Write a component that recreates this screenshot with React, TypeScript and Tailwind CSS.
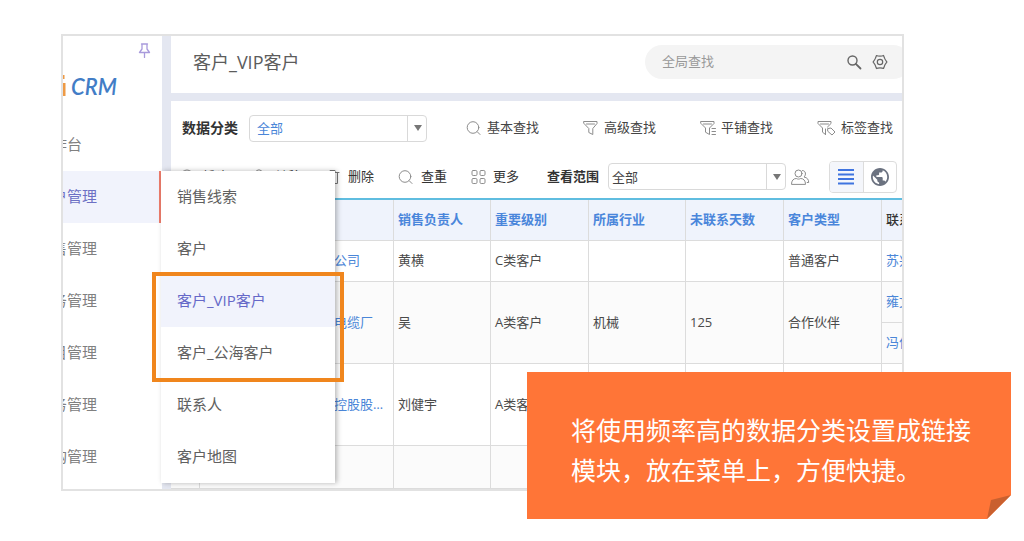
import type { ReactNode } from "react";

const mainMenu = [
  { name: "工作台", active: false },
  { name: "客户管理", active: true },
  { name: "销售管理", active: false },
  { name: "业务管理", active: false },
  { name: "项目管理", active: false },
  { name: "财务管理", active: false },
  { name: "采购管理", active: false },
];

const subMenu = [
  { name: "销售线索", active: false },
  { name: "客户", active: false },
  { name: "客户_VIP客户", active: true },
  { name: "客户_公海客户", active: false },
  { name: "联系人", active: false },
  { name: "客户地图", active: false },
];

const columns = ["销售负责人", "重要级别", "所属行业", "未联系天数", "客户类型"];

const customers = [
  {
    name: "上海华信科技发展有限公司",
    cells: ["黄横", "C类客户", "", "", "普通客户"],
    contacts: ["苏兴"],
    height: "h-[41px]",
    stripe: "bg-white",
  },
  {
    name: "江苏省宜兴市东方特种电缆厂",
    cells: ["吴", "A类客户", "机械", "125", "合作伙伴"],
    contacts: ["雍文", "冯伟"],
    height: "h-[41px]",
    stripe: "bg-[#fbfbfb]",
  },
  {
    name: "中国东方国际投资集团控股股份有限公司",
    cells: ["刘健宇", "A类客户", "", "", ""],
    contacts: [""],
    height: "h-[82px]",
    stripe: "bg-white",
  },
  {
    name: "",
    cells: ["", "", "", "", ""],
    contacts: [""],
    height: "h-[43px]",
    stripe: "bg-[#fbfbfb]",
  },
];

interface IconProps {
  children: ReactNode;
  className?: string;
  viewBox?: string;
}

function Icon({ children, className = "w-4 h-4", viewBox = "0 0 16 16" }: IconProps) {
  return (
    <svg
      viewBox={viewBox}
      className={`shrink-0 ${className}`}
      fill="none"
      stroke="currentColor"
      strokeLinecap="round"
      strokeLinejoin="round"
      aria-hidden="true"
    >
      {children}
    </svg>
  );
}

const SearchIcon = () => (
  <Icon className="w-4 h-4 text-[#8c8c8c]">
    <circle cx="7" cy="7.5" r="5.8" />
    <path d="M11.3 11.8 14 14.5" />
  </Icon>
);

const FunnelIcon = () => (
  <Icon className="w-4 h-4 text-[#8c8c8c]">
    <path d="M1 1.5h13v2L9.800 8.500v6l-4-2v-4L1 3.500zM3.500 4h8" />
  </Icon>
);

const FunnelListIcon = () => (
  <Icon className="w-4 h-4 text-[#8c8c8c]">
    <path d="M1 1.500h13v2L9.500 8v6.500l-4-2.300V8L1 3.500zM3.500 4h8M12 8.500h3.500M12 11.500h3.500M12 14.500h3.500" />
  </Icon>
);

const FunnelTagIcon = () => (
  <Icon className="w-[19px] h-4 text-[#8c8c8c]" viewBox="0 0 19 16">
    <path d="M8.500 14.500 5.500 12.200V8L1 3.500v-2h13v2L10.500 7M3.500 4h8M8.500 14.500V9M11 8.500l3-.5 4 4-3 3-4-3.500z" />
  </Icon>
);

const TrashIcon = () => (
  <Icon className="w-4 h-4 text-[#777]">
    <path d="M1 3.500h13M5 3.500V1.500h5v2M2.500 3.500v11h10v-11M6 6.500v5M9 6.500v5" />
  </Icon>
);

const MoreIcon = () => (
  <Icon className="w-[15px] h-4 text-[#8c8c8c]" viewBox="0 0 15 16">
    <rect x="1" y="1.500" width="5" height="5" rx="1.200" />
    <rect x="9" y="1.500" width="5" height="5" rx="1.200" />
    <rect x="1" y="9.500" width="5" height="5" rx="1.200" />
    <rect x="9" y="9.500" width="5" height="5" rx="1.200" />
  </Icon>
);

const AddIcon = () => (
  <Icon className="w-4 h-4 text-[#8c8c8c]">
    <circle cx="8" cy="7.500" r="6.500" />
    <path d="M8 4.500v6M5 7.500h6" />
  </Icon>
);

const TransferIcon = () => (
  <Icon className="w-4 h-4 text-[#8c8c8c]">
    <circle cx="7" cy="4" r="3.200" />
    <path d="M1 14.500c0-4 2.500-6 6-6s6 2 6 6z" />
  </Icon>
);

const PinIcon = () => (
  <Icon className="w-[13px] h-[15px] text-[#a99bdc]" viewBox="0 0 13 15">
    <path
      d="M3.500 1h6M4 1.500V6L1.500 9.500h10L9 6V1.500M6.500 10v4.500"
      strokeWidth="1.300"
    />
  </Icon>
);

interface DropdownProps {
  id: string;
  className: string;
}

function Dropdown({ id, className }: DropdownProps) {
  return (
    <div className="relative w-[178px] shrink-0">
      <select
        id={id}
        className={`block w-full h-[27px] appearance-none rounded border border-[#d9d9d9] bg-white text-[13px] leading-5 ${className}`}
      >
        <option>全部</option>
      </select>
      <span className="pointer-events-none absolute inset-y-0 right-0 flex w-5 items-center justify-center border-l border-[#d9d9d9]">
        <svg viewBox="0 0 8 6" className="w-2 h-1.5" fill="#777" aria-hidden="true">
          <path d="M0 0h8L4 6z" />
        </svg>
      </span>
    </div>
  );
}

function ToolButton({ icon, label }: { icon: ReactNode; label: string }) {
  return (
    <button type="button" className="flex shrink-0 items-center gap-[7px] whitespace-nowrap text-[#333]">
      {icon}
      {label}
    </button>
  );
}

function FilterButton({ icon, label }: { icon: ReactNode; label: string }) {
  return (
    <button type="button" className="flex shrink-0 items-center gap-[5px] whitespace-nowrap text-[#444]">
      {icon}
      {label}
    </button>
  );
}

function Sidebar() {
  return (
    <nav className="w-[99px] shrink-0 bg-white">
      <div className="flex h-[83px] flex-col">
        <button type="button" aria-label="固定菜单" className="ml-auto mr-[11px] mt-[7px]">
          <PinIcon />
        </button>
        <div className="mt-[17px] flex items-center">
          <svg viewBox="0 0 3 24" className="h-6 w-[3px]" aria-hidden="true">
            <path d="M0 0h1.500v4H0zM0 8h2.500v13H0z" fill="#ee9a45" />
          </svg>
          <span className="ml-[5px] font-['Lato'] text-[22px] leading-6 font-semibold italic text-[#427dc6]">CRM</span>
        </div>
      </div>
      <ul>
        {mainMenu.map((item) => (
          <li key={item.name}>
            <a
              href="#"
              className={`flex h-[52px] w-[98px] items-center border-r-2 pb-0.5 text-[15px] whitespace-nowrap ${
                item.active ? "border-[#ee7c6c] bg-[#f1f3fc] text-[#6d70c4]" : "border-transparent text-[#808080]"
              }`}
            >
              <span className="-ml-[26px]">{item.name}</span>
            </a>
          </li>
        ))}
      </ul>
    </nav>
  );
}

function SubMenu() {
  return (
    <ul className="absolute left-[98px] top-[135px] w-[174px] bg-white shadow-[2px_0_5px_rgba(0,0,0,0.28)]">
      {subMenu.map((item) => (
        <li key={item.name}>
          <a
            href="#"
            className={`flex h-[52px] items-center pb-0.5 pl-4 text-[15px] ${
              item.active ? "bg-[#f1f3fc] text-[#6568c8]" : "text-[#606060]"
            }`}
          >
            {item.name}
          </a>
        </li>
      ))}
    </ul>
  );
}

function Header() {
  return (
    <header className="flex h-[57px] items-center bg-white pb-[5px] pl-[22px]">
      <h1 className="text-lg leading-6 whitespace-nowrap text-[#5c5c5c]">客户_VIP客户</h1>
      <div className="-mr-2 ml-auto flex h-[34px] w-[265px] shrink-0 items-center rounded-full bg-[#f4f4f4] pl-[17px]">
        <input
          type="text"
          aria-label="全局查找"
          placeholder="全局查找"
          className="w-[184px] bg-transparent text-[13px] outline-none placeholder:text-[#999]"
        />
        <button type="button" aria-label="查找" className="text-[#666]">
          <Icon>
            <circle cx="6.500" cy="6.500" r="4.500" strokeWidth="1.400" />
            <path d="M9.800 9.800 14.500 14.500" strokeWidth="1.800" />
          </Icon>
        </button>
        <button type="button" aria-label="设置" className="ml-2.5 text-[#666]">
          <Icon>
            <path
              d="M4.500 1.500c1.500.9 5.500.9 7 0l1 2.500c.3 1.500 1.300 2.500 2.500 4-1.200 1.500-2.200 2.500-2.500 4l-1 2.500c-1.500-.9-5.500-.9-7 0l-1-2.500c-.3-1.500-1.300-2.500-2.500-4 1.200-1.500 2.200-2.500 2.500-4z"
              strokeWidth="1.200"
            />
            <circle cx="8" cy="8" r="2.700" strokeWidth="1.200" />
          </Icon>
        </button>
      </div>
    </header>
  );
}

function CustomerTable() {
  const cell = "border-r border-b border-[#dcdcdc] px-1 truncate";
  return (
    <table className="w-full table-fixed border-separate border-spacing-0 border-t-2 border-[#5fbde0] text-left text-[13px] text-[#4a4a4a]">
      <colgroup>
        <col className="w-[29px]" />
        <col className="w-[194px]" />
        <col className="w-[97px]" />
        <col className="w-[98px]" />
        <col className="w-[97px]" />
        <col className="w-[98px]" />
        <col className="w-[98px]" />
        <col />
      </colgroup>
      <thead>
        <tr className="h-[41px] bg-[#eff3fc] text-[#4a86db]">
          <th className={cell}></th>
          <th className={cell}></th>
          {columns.map((name) => (
            <th key={name} className={`${cell} font-bold`}>{name}</th>
          ))}
          <th className="overflow-hidden border-b border-[#dcdcdc] px-1 font-medium whitespace-nowrap text-[#333]">联系人</th>
        </tr>
      </thead>
      {customers.map((row, i) => (
        <tbody key={i} className={row.stripe}>
          {row.contacts.map((contact, n) => (
            <tr key={n} className={row.height}>
              {n === 0 && (
                <>
                  <td rowSpan={row.contacts.length} className={cell}></td>
                  <td rowSpan={row.contacts.length} className={`${cell} text-[#4a86d8]`}>{row.name}</td>
                  {row.cells.map((text, c) => (
                    <td key={c} rowSpan={row.contacts.length} className={cell}>{text}</td>
                  ))}
                </>
              )}
              <td className="overflow-hidden border-b border-[#dcdcdc] px-1 whitespace-nowrap text-[#4a86d8]">{contact}</td>
            </tr>
          ))}
        </tbody>
      ))}
    </table>
  );
}

function Workspace() {
  return (
    <main className="mt-2 min-w-0 bg-white text-[13px]">
      {/* 查找条件 */}
      <div className="flex h-[54px] items-center pl-[11px] pr-[9px]">
        <label htmlFor="category" className="mr-[11px] shrink-0 text-sm font-bold text-[#333]">数据分类</label>
        <Dropdown id="category" className="pl-[7px] text-[#4a86d8]" />
        <div className="ml-auto flex gap-11">
          <FilterButton icon={<SearchIcon />} label="基本查找" />
          <FilterButton icon={<FunnelIcon />} label="高级查找" />
          <FilterButton icon={<FunnelListIcon />} label="平铺查找" />
          <FilterButton icon={<FunnelTagIcon />} label="标签查找" />
        </div>
      </div>

      {/* 操作按钮 */}
      <div className="flex h-[43px] items-center pl-2 pr-[5px]">
        <div className="flex gap-6">
          <ToolButton icon={<AddIcon />} label="新建" />
          <ToolButton icon={<TransferIcon />} label="转移" />
          <ToolButton icon={<TrashIcon />} label="删除" />
          <ToolButton icon={<SearchIcon />} label="查重" />
          <ToolButton icon={<MoreIcon />} label="更多" />
        </div>
        <label htmlFor="scope" className="ml-auto mr-[9px] shrink-0 font-bold text-[#333]">查看范围</label>
        <Dropdown id="scope" className="pl-[3px] text-[#444]" />
        <button type="button" aria-label="共享成员" className="ml-1 text-[#8c8c8c]">
          <Icon className="w-5 h-4" viewBox="0 0 20 16">
            <circle cx="8.500" cy="4.500" r="3.500" />
            <path d="M1.500 15c0-3.500 2-5.500 4.800-5.500 1.500.8 3 .8 4.400 0 2.800 0 4.800 2 4.800 5.500zM12.500 1.500c3.500 0 3.800 4.500 1.500 6.500 3.200.5 4.700 2.500 4.700 5.500h-1.500" />
          </Icon>
        </button>
        <div className="ml-[19px] flex h-8 w-[68px] shrink-0 overflow-hidden rounded border border-[#dcdcdc]">
          <button
            type="button"
            aria-label="列表"
            className="flex flex-1 items-center justify-center border-r border-[#dcdcdc] bg-[#f4f6fb] text-[#3f74e0]"
          >
            <svg viewBox="0 0 16 16" className="w-4 h-4" fill="currentColor" aria-hidden="true">
              <path d="M0 0h16v2H0zM0 4.500h16v2H0zM0 9h16v2H0zM0 13.500h16v2H0z" />
            </svg>
          </button>
          <button type="button" aria-label="地图" className="flex flex-1 items-center justify-center text-[#6b7280]">
            <svg viewBox="2 2 20 20" className="w-[18px] h-[18px]" fill="currentColor" aria-hidden="true">
              <path d="M12 2C6.480 2 2 6.480 2 12s4.480 10 10 10 10-4.480 10-10S17.520 2 12 2zm-1 17.930c-3.950-.49-7-3.850-7-7.930 0-.62.080-1.210.210-1.790L9 15v1c0 1.100.9 2 2 2v1.930zm6.900-2.540c-.26-.81-1-1.390-1.900-1.390h-1v-3c0-.55-.45-1-1-1H8v-2h2c.55 0 1-.45 1-1V7h2c1.100 0 2-.9 2-2v-.41c2.930 1.190 5 4.060 5 7.410 0 2.080-.8 3.970-2.100 5.390z" />
            </svg>
          </button>
        </div>
      </div>

      <CustomerTable />
    </main>
  );
}

export default function App() {
  return (
    <div className="relative min-h-screen bg-white pt-[34px] pr-[120px] pb-[51px] pl-[61px] font-['Open_Sans','Noto_Sans_CJK_SC',sans-serif]">
      <div className="relative flex overflow-hidden border-2 border-[#e2e2e2] bg-[#e4e7f1]">
        <Sidebar />
        <div className="ml-[9px] min-w-0 flex-1">
          <Header />
          <Workspace />
        </div>
        <SubMenu />
        <div className="pointer-events-none absolute left-[89px] top-[236px] h-[110px] w-[192px] border-4 border-[#f0861d]"></div>
      </div>

      {/* 说明标签 */}
      <aside className="absolute right-[13px] top-[372px] w-[484px] bg-[#ff7537] pt-[38px] pr-5 pb-[29px] pl-11 text-[25px] leading-10 text-white">
        <p>
          将使用频率高的数据分类设置成链接
          <br />
          模块，放在菜单上，方便快捷。
        </p>
        <svg viewBox="0 0 24 24" className="absolute right-0 bottom-0 w-6 h-6" aria-hidden="true">
          <path d="M24 0v24H0z" fill="#fff" />
          <path d="M24 0 4 5 0 24z" fill="#c9602f" />
        </svg>
      </aside>
    </div>
  );
}
